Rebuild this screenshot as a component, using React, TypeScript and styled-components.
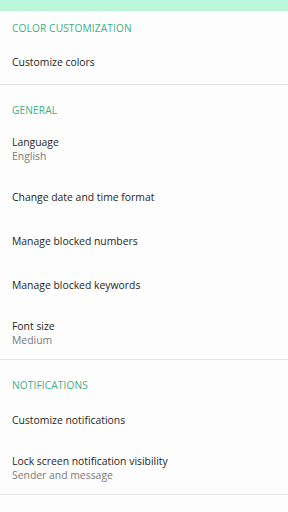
import React from "react";
import styled, { createGlobalStyle } from "styled-components";

const GlobalStyle = createGlobalStyle`
  body {
    margin: 0;
    background: #fdfdfd;
    font-family: "Open Sans", "Noto Sans", sans-serif;
  }
`;

interface Item {
  title: string;
  value?: string;
}

interface Section {
  header: string;
  items: Item[];
}

const sections: Section[] = [
  {
    header: "COLOR CUSTOMIZATION",
    items: [{ title: "Customize colors" }],
  },
  {
    header: "GENERAL",
    items: [
      { title: "Language", value: "English" },
      { title: "Change date and time format" },
      { title: "Manage blocked numbers" },
      { title: "Manage blocked keywords" },
      { title: "Font size", value: "Medium" },
    ],
  },
  {
    header: "NOTIFICATIONS",
    items: [
      { title: "Customize notifications" },
      { title: "Lock screen notification visibility", value: "Sender and message" },
    ],
  },
];

const Screen = styled.div`
  width: 288px;
  min-height: 512px;
  display: flex;
  flex-direction: column;
  background: #fdfdfd;
`;

const TopBar = styled.div`
  height: 11px;
  background: #b9f6da;
`;

const Group = styled.section`
  display: flex;
  flex-direction: column;
  border-bottom: 1px solid #e6e6e6;
`;

const Header = styled.div<{ $first?: boolean }>`
  height: ${(p) => (p.$first ? 29 : 38)}px;
  box-sizing: border-box;
  padding: ${(p) => (p.$first ? 10 : 18)}px 12px 0;
  font-size: 10.2px;
  line-height: 14px;
  color: #3daf82;
  letter-spacing: 0.1px;
`;

const Row = styled.div<{ $tall?: boolean }>`
  height: ${(p) => (p.$tall ? 52 : 44)}px;
  box-sizing: border-box;
  padding: 0 12px;
  display: flex;
  flex-direction: column;
  justify-content: center;
`;

const Title = styled.div`
  font-size: 10.4px;
  line-height: 14px;
  color: #262626;
`;

const Value = styled.div`
  font-size: 10.4px;
  line-height: 14px;
  color: #7a7a7a;
`;

export default function App() {
  return (
    <>
      <GlobalStyle />
      <Screen>
        <TopBar />
        {sections.map((s, i) => (
          <Group key={s.header}>
            <Header $first={i === 0}>{s.header}</Header>
            {s.items.map((it) => (
              <Row key={it.title} $tall={!!it.value}>
                <Title>{it.title}</Title>
                {it.value && <Value>{it.value}</Value>}
              </Row>
            ))}
          </Group>
        ))}
      </Screen>
    </>
  );
}
